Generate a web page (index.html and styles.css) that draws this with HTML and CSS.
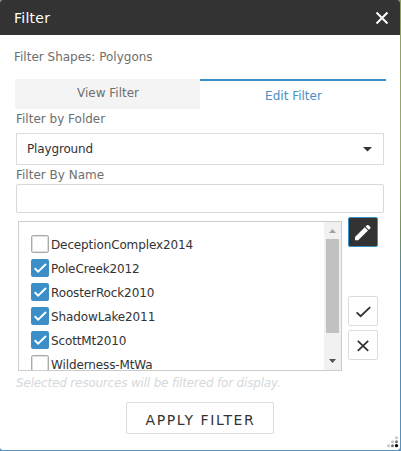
FILE: index.html
```html
<!DOCTYPE html>
<html lang="en">
<head>
<meta charset="utf-8">
<title>Filter</title>
<link rel="stylesheet" href="styles.css">
</head>
<body>
<div class="panel">
  <header class="header">
    <h1 class="title">Filter</h1>
    <svg class="close" width="14" height="14" viewBox="0 0 14 14"><path d="M1.5 1.5 12.5 12.5M12.5 1.5 1.5 12.5"/></svg>
  </header>
  <p class="shapes">Filter Shapes: Polygons</p>
  <nav class="tabs">
    <div class="tab">View Filter</div>
    <div class="tab active">Edit Filter</div>
  </nav>
  <main class="form">
    <div class="label folder">Filter by Folder</div>
    <div class="select"><span>Playground</span><svg width="9" height="5" viewBox="0 0 9 5"><path d="M0 0h9L4.5 4.5z" fill="#333"/></svg></div>
    <div class="label name">Filter By Name</div>
    <div class="input"></div>
    <div class="picker">
      <div class="list">
        <div class="items">
          <div class="item"><i class="box"></i><span>DeceptionComplex2014</span></div>
          <div class="item"><i class="box on"><svg width="18" height="18" viewBox="0 0 18 18"><path d="M3.7 9.2 7.2 12.7 15 5"/></svg></i><span>PoleCreek2012</span></div>
          <div class="item"><i class="box on"><svg width="18" height="18" viewBox="0 0 18 18"><path d="M3.7 9.2 7.2 12.7 15 5"/></svg></i><span>RoosterRock2010</span></div>
          <div class="item"><i class="box on"><svg width="18" height="18" viewBox="0 0 18 18"><path d="M3.7 9.2 7.2 12.7 15 5"/></svg></i><span>ShadowLake2011</span></div>
          <div class="item"><i class="box on"><svg width="18" height="18" viewBox="0 0 18 18"><path d="M3.7 9.2 7.2 12.7 15 5"/></svg></i><span>ScottMt2010</span></div>
          <div class="item"><i class="box"></i><span>Wilderness-MtWa</span></div>
        </div>
        <div class="scrollbar">
          <svg width="17" height="17" viewBox="0 0 17 17"><path d="M5 11h7L8.5 7z" fill="#a3a3a3"/></svg>
          <div class="thumb"></div>
          <svg width="17" height="17" viewBox="0 0 17 17"><path d="M5 6h7L8.5 10z" fill="#505050"/></svg>
        </div>
      </div>
      <div class="tools">
        <div class="tool dark"><svg width="28" height="28" viewBox="0 0 28 28"><path fill="#fff" d="M6 19 15.8 9.2 19 12.4 9.2 22.2H6z"/><path fill="#fff" d="M16.5 8.5 17.9 7.2Q18.9 6.5 19.9 7.4L21.2 8.8Q21.9 9.7 21.2 10.6L19.7 11.7z"/></svg></div>
        <div class="tool accept"><svg width="28" height="28" viewBox="0 0 28 28"><path class="line" d="M7.6 15.4 11.6 19.2 21.2 10.2"/></svg></div>
        <div class="tool"><svg width="28" height="28" viewBox="0 0 28 28"><path class="line" d="M8.8 9.8 19.2 19.8M19.2 9.8 8.8 19.8"/></svg></div>
      </div>
    </div>
    <div class="note">Selected resources will be filtered for display.</div>
    <div class="apply">APPLY FILTER</div>
  </main>
  <svg class="grip" width="12" height="12" viewBox="0 0 12 12">
    <g fill="#c4c4c4"><circle cx="9.5" cy="1.7" r="1.5"/><circle cx="5.5" cy="5.7" r="1.5"/><circle cx="1.5" cy="9.7" r="1.5"/></g>
    <g fill="#777"><circle cx="9.5" cy="5.7" r="1.5"/><circle cx="5.5" cy="9.7" r="1.5"/></g>
    <circle cx="9.5" cy="9.7" r="1.6"/>
  </svg>
</div>
</body>
</html>
```

FILE: styles.css
```css
* { box-sizing: border-box; }
body {
  margin: 0;
  width: 401px;
  height: 451px;
  overflow: hidden;
  background: linear-gradient(#8fa060, #9aa970 35%, #75915c 52%, #4c87b0 62%, #5b91bd);
  font: 12px/18px "DejaVu Sans", Verdana, sans-serif;
  color: #333;
}
.panel {
  position: relative;
  width: 400px;
  height: 450px;
  background: #fff;
  border-radius: 3px;
  overflow: hidden;
}
.header {
  height: 35px;
  padding: 0 11px 0 14px;
  display: flex;
  align-items: center;
  justify-content: space-between;
  background: #333;
}
.title { margin: 0; font-size: 14px; font-weight: 400; color: #fff; letter-spacing: .25px; }
.close { fill: none; stroke: #fff; stroke-width: 2; }
.shapes { margin: 13px 0 0 14px; height: 18px; color: #6e6e6e; }
.tabs { display: flex; margin: 13px 14px 0 15px; height: 30px; }
.tab { width: 185px; text-align: center; background: #f4f4f4; color: #6e6e6e; padding: 5px 0 0 1px; }
.tab.active { width: 186px; background: #fff; color: #4a90c4; border-top: 2px solid #3b8ec6; padding-top: 6px; }
.form { margin-left: 16px; width: 368px; }
.label { height: 18px; padding-top: 1px; color: #6e6e6e; }
.folder { height: 24px; }
.select {
  height: 32px;
  padding: 0 11px 0 10px;
  border: 1px solid #dcdcdc;
  display: flex;
  align-items: center;
  justify-content: space-between;
  letter-spacing: -.15px;
}
.name { height: 19px; }
.input { height: 29px; border: 1px solid #d6dadc; border-radius: 2px; }
.picker { display: flex; gap: 6px; height: 154px; margin: 4px 0 0 2px; }
.list {
  width: 324px;
  height: 150px;
  margin-top: 4px;
  border: 1px solid #ccc;
  display: flex;
  overflow: hidden;
}
.items { flex: 1; padding: 10px 0 0 12px; letter-spacing: -.12px; }
.item { display: flex; align-items: center; height: 24px; gap: 2px; }
.item span { padding-top: 2px; }
.box { width: 18px; height: 18px; flex: none; border: 1px solid #ababab; border-radius: 2px; box-shadow: inset 0 0 0 1px #ddd; }
.box.on { border: 0; background: #3b8ec6; box-shadow: none; }
.box svg { display: block; fill: none; stroke: #fff; stroke-width: 2; }
.scrollbar { width: 17px; height: 148px; background: #f1f1f1; display: flex; flex-direction: column; }
.thumb { height: 94px; margin: 0 2px 20px; background: #c1c1c1; }
.scrollbar svg { flex: none; }
.tools { width: 30px; }
.tool { width: 30px; height: 30px; border: 1px solid #dcdcdc; border-radius: 2px; margin-top: 4px; }
.tool svg { display: block; }
.tool.dark { margin: 0; background: #333; border-color: #3b8ec6; }
.accept { margin-top: 49px; }
.line { fill: none; stroke: #333; stroke-width: 1.8; }
.note { height: 18px; margin-top: 3px; color: #d5d9dc; font-style: italic; letter-spacing: -.18px; white-space: nowrap; }
.apply {
  width: 148px;
  height: 32px;
  margin: 10px 0 0 110px;
  padding: 3px 0 0 1px;
  border: 1px solid #dcdcdc;
  border-radius: 2px;
  display: flex;
  align-items: center;
  justify-content: center;
  font-size: 14px;
  letter-spacing: 1.6px;
  white-space: nowrap;
}
.grip { position: absolute; right: 1px; bottom: 2px; }
```
